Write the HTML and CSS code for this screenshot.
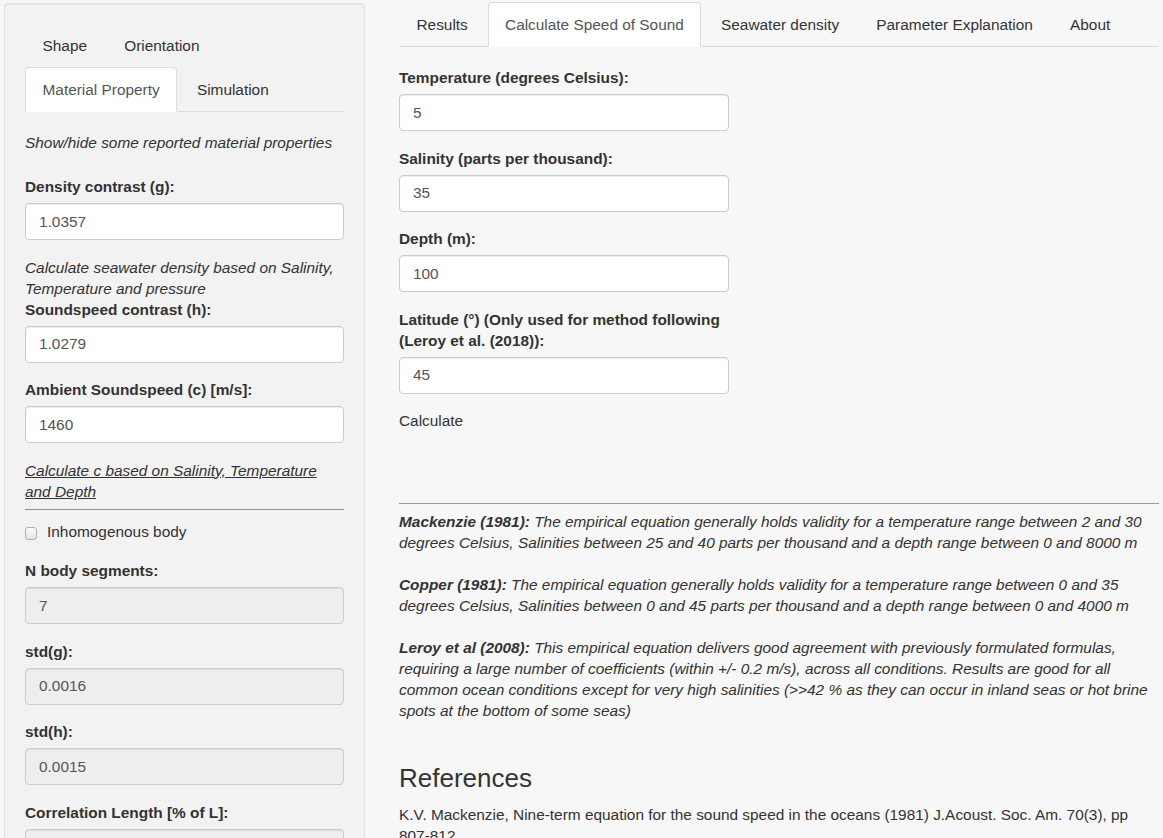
FILE: index.html
```html
<!DOCTYPE html>
<html lang="en">
<head>
<meta charset="utf-8">
<title>Speed of Sound</title>
<link rel="stylesheet" href="styles.css">
</head>
<body>
<div class="page">
  <aside class="sidebar">
    <ul class="tabs">
      <li class="tab"><a class="tab-link" href="#">Shape</a></li>
      <li class="tab"><a class="tab-link" href="#">Orientation</a></li>
      <li class="tab tab-active"><a class="tab-link" href="#">Material Property</a></li>
      <li class="tab"><a class="tab-link" href="#">Simulation</a></li>
    </ul>
    <div class="side-body">
      <p class="note note-first">Show/hide some reported material properties</p>
      <div class="field">
        <label class="field-label" for="g">Density contrast (g):</label>
        <input class="input" id="g" type="text" value="1.0357">
      </div>
      <p class="note">Calculate seawater density based on Salinity, Temperature and pressure</p>
      <div class="field">
        <label class="field-label" for="h">Soundspeed contrast (h):</label>
        <input class="input" id="h" type="text" value="1.0279">
      </div>
      <div class="field">
        <label class="field-label" for="c">Ambient Soundspeed (c) [m/s]:</label>
        <input class="input" id="c" type="text" value="1460">
      </div>
      <p class="note"><a class="note-link" href="#">Calculate c based on Salinity, Temperature and Depth</a></p>
      <hr class="rule rule-side">
      <div class="check">
        <input class="check-box" id="inh" type="checkbox">
        <label class="check-label" for="inh">Inhomogenous body</label>
      </div>
      <div class="field">
        <label class="field-label" for="n">N body segments:</label>
        <input class="input" id="n" type="text" value="7" disabled>
      </div>
      <div class="field">
        <label class="field-label" for="sg">std(g):</label>
        <input class="input" id="sg" type="text" value="0.0016" disabled>
      </div>
      <div class="field">
        <label class="field-label" for="sh">std(h):</label>
        <input class="input" id="sh" type="text" value="0.0015" disabled>
      </div>
      <div class="field">
        <label class="field-label" for="cl">Correlation Length [% of L]:</label>
        <input class="input" id="cl" type="text" value="" disabled>
      </div>
    </div>
  </aside>

  <main class="main">
    <ul class="tabs">
      <li class="tab"><a class="tab-link" href="#">Results</a></li>
      <li class="tab tab-active"><a class="tab-link" href="#">Calculate Speed of Sound</a></li>
      <li class="tab"><a class="tab-link" href="#">Seawater density</a></li>
      <li class="tab"><a class="tab-link" href="#">Parameter Explanation</a></li>
      <li class="tab"><a class="tab-link" href="#">About</a></li>
    </ul>
    <div class="main-body">
      <div class="field field-main">
        <label class="field-label" for="t">Temperature (degrees Celsius):</label>
        <input class="input" id="t" type="text" value="5">
      </div>
      <div class="field field-main">
        <label class="field-label" for="s">Salinity (parts per thousand):</label>
        <input class="input" id="s" type="text" value="35">
      </div>
      <div class="field field-main">
        <label class="field-label" for="d">Depth (m):</label>
        <input class="input" id="d" type="text" value="100">
      </div>
      <div class="field field-main">
        <label class="field-label" for="lat">Latitude (°) (Only used for method following (Leroy et al. (2018)):</label>
        <input class="input" id="lat" type="text" value="45">
      </div>
      <div class="action">Calculate</div>
      <hr class="rule rule-main">
      <div class="methods">
        <p class="method"><b>Mackenzie (1981):</b> The empirical equation generally holds validity for a temperature range between 2 and 30 degrees Celsius, Salinities between 25 and 40 parts per thousand and a depth range between 0 and 8000 m</p>
        <p class="method"><b>Copper (1981):</b> The empirical equation generally holds validity for a temperature range between 0 and 35 degrees Celsius, Salinities between 0 and 45 parts per thousand and a depth range between 0 and 4000 m</p>
        <p class="method"><b>Leroy et al (2008):</b> This empirical equation delivers good agreement with previously formulated formulas, requiring a large number of coefficients (within +/- 0.2 m/s), across all conditions. Results are good for all common ocean conditions except for very high salinities (&gt;&gt;42 % as they can occur in inland seas or hot brine spots at the bottom of some seas)</p>
      </div>
      <h3 class="refs-title">References</h3>
      <p class="ref">K.V. Mackenzie, Nine-term equation for the sound speed in the oceans (1981) J.Acoust. Soc. Am. 70(3), pp 807-812</p>
    </div>
  </main>
</div>
</body>
</html>
```

FILE: styles.css
```css
* {
  box-sizing: border-box;
}

html,
body {
  margin: 0;
  height: 100%;
}

body {
  background: #f7f7f7;
  color: #333;
  font-family: "Liberation Sans", Arial, Helvetica, sans-serif;
  font-size: 15.4px;
  line-height: 21px;
  overflow: hidden;
}

.page {
  display: flex;
  align-items: flex-start;
  gap: 34px;
  height: 100vh;
  padding: 3px 4px 0;
  overflow: hidden;
}

/* ---------- sidebar ---------- */
.sidebar {
  flex: none;
  width: 361px;
  padding: 19px 20px;
  background: #f2f2f2;
  border: 1px solid #e3e3e3;
  border-radius: 4px;
  box-shadow: inset 0 1px 1px rgba(0, 0, 0, 0.05);
}

.side-body {
  padding-top: 20px;
}

.note {
  margin: 0;
  font-style: italic;
}

.note-first {
  margin-bottom: 23px;
}

.note-link {
  color: #333;
  text-decoration: underline;
}

.rule {
  border: 0;
  height: 0;
}

.rule-side {
  margin: 7.5px 0 0;
  border-top: 1px solid #8c8c8c;
}

.check {
  display: flex;
  align-items: flex-start;
  margin: 11px 0 18px;
}

.check-box {
  appearance: none;
  -webkit-appearance: none;
  flex: none;
  width: 12px;
  height: 13px;
  margin: 6px 10px 0 0;
  border: 1px solid #b0b0b0;
  border-radius: 3px;
  background: linear-gradient(#fbfbfb, #e4e4e4);
}

.check-label {
  font-weight: normal;
}

/* ---------- tabs ---------- */
.tabs {
  display: flex;
  flex-wrap: wrap;
  margin: 0;
  padding: 0;
  list-style: none;
  border-bottom: 1px solid #ddd;
}

.tab {
  margin: 0 2.2px -1px 0;
}

.tab-link {
  display: block;
  padding: 11px 16.5px;
  border: 1px solid transparent;
  border-radius: 4px 4px 0 0;
  color: #333;
  text-decoration: none;
}

.tab-active .tab-link {
  background: #fff;
  border-color: #ddd;
  border-bottom-color: transparent;
  color: #555;
}

/* ---------- form fields ---------- */
.field {
  margin-bottom: 16.5px;
}

.field-label {
  display: block;
  margin-bottom: 6px;
  font-weight: bold;
}

.input {
  display: block;
  width: 100%;
  height: 37px;
  padding: 0 13px;
  font: inherit;
  color: #555;
  background: #fff;
  border: 1px solid #ccc;
  border-radius: 4px;
  box-shadow: inset 0 1px 1px rgba(0, 0, 0, 0.075);
  outline: none;
}

.input:disabled {
  background: #eee;
  color: #555;
  opacity: 1;
}

/* ---------- main ---------- */
.main {
  flex: 1;
  min-width: 0;
  margin-top: -1px;
}

.main-body {
  padding-top: 20px;
}

.field-main {
  width: 330px;
}

.action {
  margin: 0;
}

.rule-main {
  margin: 72px 0 7px;
  border-top: 1px solid #999;
}

.method {
  margin: 0 0 21px;
  font-style: italic;
}

.refs-title {
  margin: 43px 0 11px;
  font-size: 26px;
  line-height: 28.6px;
  font-weight: normal;
}

.ref {
  margin: 0;
}
```
